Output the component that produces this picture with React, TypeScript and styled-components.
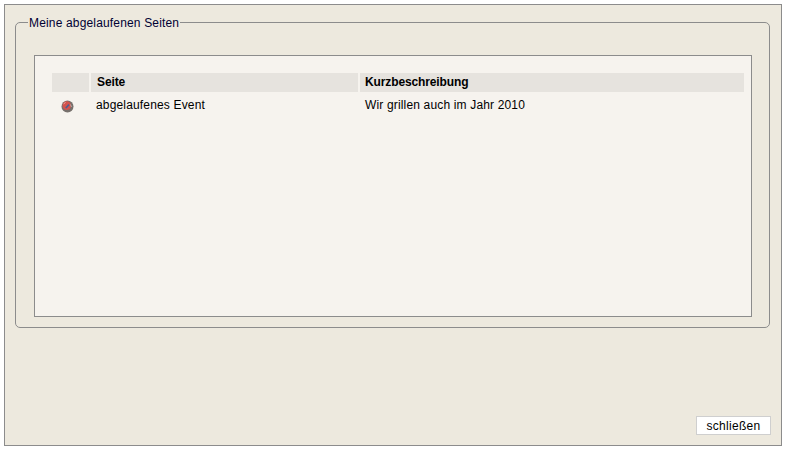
import React from "react";
import styled, { createGlobalStyle } from "styled-components";

const GlobalStyle = createGlobalStyle`
  html, body {
    margin: 0;
    padding: 0;
    background-color: #ffffff;
    font-family: "Liberation Sans", Arial, sans-serif;
    font-size: 12px;
    color: #000000;
  }
`;

const Page = styled.div`
  width: 789px;
  height: 454px;
  padding: 4px 0 0 4px;
  box-sizing: border-box;
`;

const Dialog = styled.main`
  width: 778px;
  height: 442px;
  box-sizing: border-box;
  background-color: #ede9de;
  border: 1px solid #8c8c8c;
  padding: 9px 10px 10px 10px;
  display: flex;
  flex-direction: column;
  justify-content: space-between;
`;

const Group = styled.fieldset`
  width: 755px;
  height: 314px;
  margin: 0;
  box-sizing: border-box;
  border: 1px solid #8c8c8c;
  border-radius: 5px;
  padding: 0;
`;

const GroupTitle = styled.legend`
  margin-left: 12px;
  padding: 2px 1px 0;
  font-size: 12px;
  line-height: 14px;
  letter-spacing: 0.16px;
  color: #000033;
`;

const ListPanel = styled.div`
  height: 262px;
  margin: 25px 17px 0 18px;
  box-sizing: border-box;
  background-color: #f6f3ee;
  border: 1px solid #8c8c8c;
  padding: 17px 6px 0 17px;
`;

const Table = styled.div`
  width: 692px;
`;

const Row = styled.div`
  display: grid;
  grid-template-columns: 37px 267px 384px;
  column-gap: 2px;
`;

const HeadCell = styled.div<{ $inset?: number }>`
  height: 19px;
  background-color: #e6e3de;
  padding-left: ${(p) => p.$inset ?? 6}px;
  font-weight: 700;
  font-size: 12px;
  line-height: 19px;
  letter-spacing: -0.12px;
  color: #000000;
`;

const Cell = styled.div`
  height: 26px;
  padding-left: 5px;
  font-size: 12px;
  line-height: 27px;
  letter-spacing: 0.16px;
  color: #000000;
`;

const IconCell = styled.div`
  height: 26px;
  box-sizing: border-box;
  display: flex;
  align-items: center;
  justify-content: center;
  padding: 2px 7px 0 0;
`;

const Footer = styled.div`
  display: flex;
  justify-content: flex-end;
`;

const CloseButton = styled.button`
  width: 75px;
  height: 19px;
  box-sizing: border-box;
  background-color: #ffffff;
  border: 1px solid #cfcfcf;
  padding: 0;
  font-family: "Liberation Sans", Arial, sans-serif;
  font-size: 12px;
  letter-spacing: 0.3px;
  color: #000000;
`;

const ExpiredIcon = () => (
  <svg width="13" height="13" viewBox="0 0 13 13" aria-hidden="true">
    <circle cx="6.5" cy="6.5" r="6" fill="#77706c" />
    <circle cx="5.8" cy="5.6" r="4.3" fill="#d4534c" />
    <path d="M4.8 8 L8 4.6" stroke="#4a5f96" strokeWidth="1.6" />
    <path d="M2.6 4 L4.6 2.4" stroke="#e8a79f" strokeWidth="1" />
    <path d="M9.5 4.5 L10.5 7" stroke="#b9b2ad" strokeWidth="1" />
  </svg>
);

const App: React.FC = () => {
  return (
    <Page>
      <GlobalStyle />
      <Dialog>
        <Group>
          <GroupTitle>Meine abgelaufenen Seiten</GroupTitle>
          <ListPanel>
            <Table>
              <Row>
                <HeadCell />
                <HeadCell>Seite</HeadCell>
                <HeadCell $inset={5}>Kurzbeschreibung</HeadCell>
              </Row>
              <Row>
                <IconCell>
                  <ExpiredIcon />
                </IconCell>
                <Cell>abgelaufenes Event</Cell>
                <Cell>Wir grillen auch im Jahr 2010</Cell>
              </Row>
            </Table>
          </ListPanel>
        </Group>
        <Footer>
          <CloseButton>schließen</CloseButton>
        </Footer>
      </Dialog>
    </Page>
  );
};

export default App;
